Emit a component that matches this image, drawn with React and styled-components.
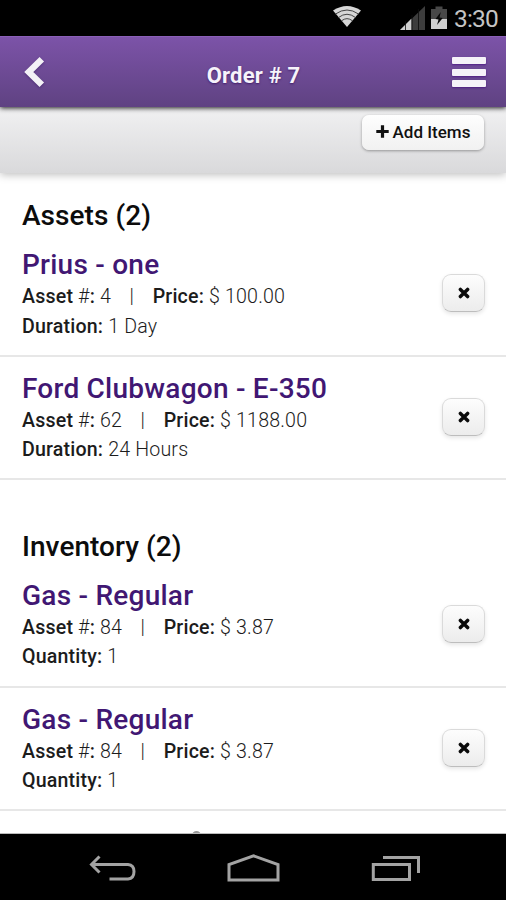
import React from "react";
import styled, { createGlobalStyle } from "styled-components";

const sections = [
  {
    title: "Assets (2)",
    items: [
      { name: "Prius - one", number: "4", price: "100.00", label: "Duration:", value: "1 Day" },
      { name: "Ford Clubwagon - E-350", number: "62", price: "1188.00", label: "Duration:", value: "24 Hours" },
    ],
  },
  {
    title: "Inventory (2)",
    items: [
      { name: "Gas - Regular", number: "84", price: "3.87", label: "Quantity:", value: "1" },
      { name: "Gas - Regular", number: "84", price: "3.87", label: "Quantity:", value: "1" },
    ],
  },
];

const App = () => {
  return (
    <Phone>
      <GlobalStyle />
      <StatusBar>
        <WifiIcon />
        <SignalIcon />
        <BatteryIcon />
        <Clock>3:30</Clock>
      </StatusBar>

      <Header>
        <BackButton aria-label="Back">
          <svg width="24" height="34" viewBox="0 0 24 34">
            <path d="M18.8 4.2 L5.8 17 L18.8 29.8" fill="none" stroke="#f3f1f6" strokeWidth="6.4" />
          </svg>
        </BackButton>
        <HeaderTitle>Order # 7</HeaderTitle>
        <MenuButton aria-label="Menu">
          <MenuLine />
          <MenuLine />
          <MenuLine />
        </MenuButton>
      </Header>

      <Toolbar>
        <AddButton>
          <svg width="13" height="13" viewBox="0 0 13 13">
            <path d="M6.5 0.3 V12.7 M0.3 6.5 H12.7" stroke="#111" strokeWidth="3.2" />
          </svg>
          Add Items
        </AddButton>
      </Toolbar>

      <Content>
        {sections.map((section) => (
          <Section key={section.title}>
            <SectionTitle>{section.title}</SectionTitle>
            {section.items.map((item, i) => (
              <Item key={i}>
                <div>
                  <ItemName>{item.name}</ItemName>
                  <Meta>
                    <b>Asset</b> #<b>:</b> {item.number}
                    <Divider>|</Divider>
                    <b>Price:</b> $ {item.price}
                  </Meta>
                  <Meta>
                    <b>{item.label}</b> {item.value}
                  </Meta>
                </div>
                <RemoveButton aria-label="Remove">
                  <svg width="12" height="12" viewBox="0 0 12 12">
                    <path d="M2.4 2.4 L9.6 9.6 M9.6 2.4 L2.4 9.6" stroke="#0b0b0b" strokeWidth="3.5" strokeLinecap="round" />
                  </svg>
                </RemoveButton>
              </Item>
            ))}
          </Section>
        ))}
        <NextPeek />
      </Content>

      <NavBar>
        <svg width="48" height="28" viewBox="0 0 48 28">
          <path d="M11.5 2.5 L3.5 10.5 L11.5 18.5 M4 10.5 H40 Q46 11 46 17.5 Q46 24.5 40 25 H21.5" {...navStroke} />
        </svg>
        <svg width="53" height="28" viewBox="0 0 53 28">
          <path d="M2 26 V10.5 L26.5 1.8 L51 10.5 V26 Z" {...navStroke} />
        </svg>
        <svg width="50" height="28" viewBox="0 0 50 28">
          <path d="M2.3 10.5 H38.5 V25.5 H2.3 Z M12 3.5 H47.5 V19" {...navStroke} />
        </svg>
      </NavBar>
    </Phone>
  );
};

const navStroke = { fill: "none", stroke: "#a3a3a3", strokeWidth: 3 };

const WifiIcon = () => (
  <StatusIcon $gap={39} width="28" height="21" viewBox="0 0 28 21">
    <path d="M0 4.5 Q14 -4.5 28 4.5 L14 21 Z" fill="#d6d6d6" />
    <path d="M2.5 8 Q14 0 25.5 8 M5.5 11.5 Q14 5 22.5 11.5 M8.5 14.8 Q14 10.5 19.5 14.8" fill="none" stroke="#444" strokeWidth="1" />
  </StatusIcon>
);

const SignalIcon = () => (
  <StatusIcon $gap={6} width="25" height="24" viewBox="0 0 25 24">
    <path d="M0 24 L25 0 V24 Z" fill="#3d3d3d" />
    <path d="M0 24 L11.5 12.5 V24 Z" fill="#d0d0d0" />
    <path d="M5.5 15 V24 M12 9 V24 M18.5 3 V24" stroke="#0d0d0d" strokeWidth="0.8" />
  </StatusIcon>
);

const BatteryIcon = () => (
  <StatusIcon $gap={7} width="16" height="24" viewBox="0 0 16 24">
    <path d="M0 3 H4.5 V0.5 H11.5 V3 H16 V23 H0 Z" fill="#484848" />
    <path d="M0 13 H16 V23 H0 Z" fill="#cecece" />
    <path d="M9.8 6 L4.5 13 L7.5 13.5 L6 19 L11.7 12 L8.5 11.5 Z" fill="#080808" />
  </StatusIcon>
);

const GlobalStyle = createGlobalStyle`
  body {
    margin: 0;
    background: #fff;
  }
  * {
    box-sizing: border-box;
  }
  button {
    font-family: inherit;
    padding: 0;
    border: none;
    background: none;
  }
  svg {
    display: block;
    flex: none;
  }
`;

const Phone = styled.div`
  display: flex;
  flex-direction: column;
  width: 506px;
  height: 900px;
  overflow: hidden;
  font-family: Roboto, sans-serif;
`;

const StatusBar = styled.div`
  display: flex;
  flex: none;
  align-items: flex-start;
  justify-content: flex-end;
  height: 36px;
  padding: 6px 8px 0 0;
  background: #000;
`;
const StatusIcon = styled.svg`
  margin-right: ${({ $gap }) => $gap}px;
`;
const Clock = styled.span`
  font-size: 24.5px;
  line-height: 26px;
  letter-spacing: -0.8px;
  color: #c4c4c4;
`;

const Header = styled.header`
  display: grid;
  grid-template-columns: 36px 1fr 36px;
  flex: none;
  align-items: center;
  z-index: 2;
  height: 71px;
  padding: 0 20px 0 21px;
  background: linear-gradient(#7c53a8, #5f4282);
  border-top: 1px solid #8a5fb8;
  box-shadow: 0 1px 5px rgba(0, 0, 0, 0.9);
`;
const BackButton = styled.button`
  display: flex;
  padding-left: 2px;
  filter: drop-shadow(0 1px 1px rgba(50, 20, 90, 0.5));
`;
const HeaderTitle = styled.h1`
  margin: 8px 0 0;
  text-align: center;
  font-size: 22px;
  font-weight: 700;
  line-height: 28px;
  letter-spacing: 0.2px;
  color: #f6f3fa;
  text-shadow: 0 1px 2px rgba(50, 10, 90, 0.7);
`;
const MenuButton = styled.button`
  display: flex;
  flex-direction: column;
  justify-self: end;
  gap: 4.5px;
  width: 34px;
`;
const MenuLine = styled.span`
  height: 7px;
  border-radius: 1px;
  background: #f5f2f8;
  box-shadow: 0 1px 2px rgba(60, 0, 120, 0.6);
`;

const Toolbar = styled.div`
  display: flex;
  flex: none;
  align-items: flex-start;
  justify-content: flex-end;
  z-index: 1;
  height: 66px;
  padding: 8px 22px 0 0;
  background: linear-gradient(#f1f1f2, #d9d9db);
  box-shadow: 0 2px 8px rgba(0, 0, 0, 0.25);
`;
const AddButton = styled.button`
  display: flex;
  align-items: center;
  justify-content: center;
  gap: 4px;
  width: 122px;
  height: 35px;
  padding-bottom: 2px;
  border-radius: 7px;
  background: linear-gradient(#fefefe, #f1f1f1);
  box-shadow: 0 1px 3px rgba(0, 0, 0, 0.35);
  font-size: 17px;
  font-weight: 500;
  color: #111;
`;

const Content = styled.main`
  flex: 1;
  min-height: 0;
  overflow: hidden;
  background: #fff;
  border-bottom: 1px solid #bbb;
`;
const Section = styled.section`
  padding-top: 26px;
  & + & {
    padding-top: 49.8px;
  }
`;
const SectionTitle = styled.h2`
  margin: 0 22px;
  font-size: 28px;
  font-weight: 500;
  line-height: 34px;
  letter-spacing: 0.05px;
  color: #0c0c0c;
`;
const Item = styled.div`
  display: flex;
  align-items: flex-start;
  justify-content: space-between;
  height: 123.6px;
  padding: 16px 21px 0 22px;
  border-bottom: 2px solid #e7e7e7;
`;
const ItemName = styled.h3`
  margin: 0 0 1px;
  font-size: 28px;
  font-weight: 500;
  line-height: 32px;
  letter-spacing: 0.24px;
  color: #411773;
`;
const Meta = styled.p`
  margin: 0;
  font-size: 19.6px;
  font-weight: 300;
  line-height: 29.5px;
  letter-spacing: 0.18px;
  color: #1c1c1c;
  b {
    font-weight: 500;
  }
`;
const Divider = styled.span`
  margin: 0 18.6px 0 18.5px;
`;
const RemoveButton = styled.button`
  display: flex;
  align-items: center;
  justify-content: center;
  width: 43px;
  height: 38px;
  margin-top: 25px;
  border: 1px solid #dadada;
  border-bottom-color: #bdbdbd;
  border-radius: 9px;
  background: linear-gradient(#fdfdfd, #ececec);
  box-shadow: 0 2px 4px rgba(0, 0, 0, 0.1);
`;
// top edge of the entry that continues under the nav bar
const NextPeek = styled.div`
  width: 9px;
  height: 9px;
  margin: 19.4px 0 0 192px;
  border: 2px solid #999;
  border-radius: 50%;
`;

const NavBar = styled.nav`
  display: flex;
  flex: none;
  align-items: flex-start;
  justify-content: space-between;
  height: 66px;
  padding: 20px 85px 0 88px;
  background: #000;
`;

export default App;
